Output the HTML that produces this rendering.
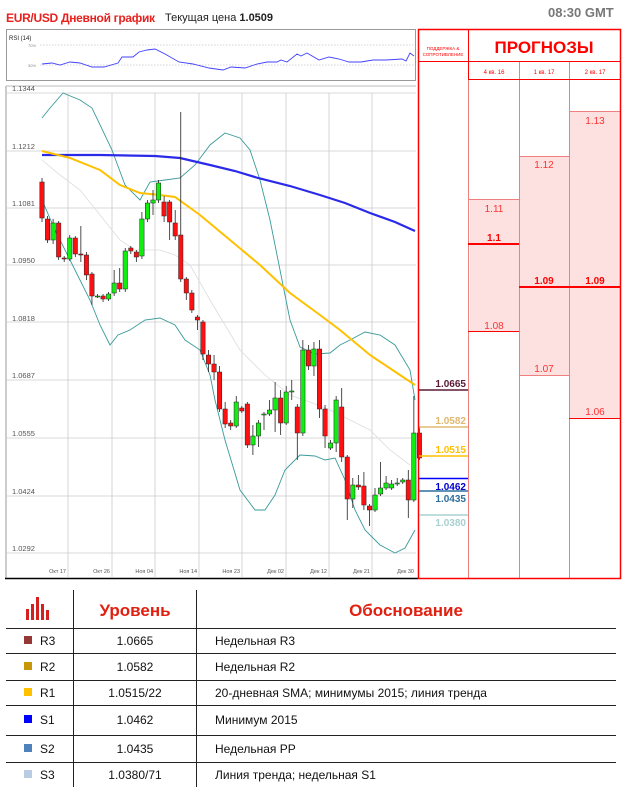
<!DOCTYPE html>
<html><head><meta charset="utf-8">
<style>
body{margin:0;background:#fff;width:627px;height:795px;overflow:hidden;font-family:"Liberation Sans",sans-serif;position:relative}
.a{position:absolute;white-space:nowrap}
</style></head><body>
<div class="a" style="left:6px;top:11px;font-size:12px;font-weight:bold;color:#e8201e;letter-spacing:-0.3px">EUR/USD Дневной график</div>
<div class="a" style="left:165px;top:12px;font-size:11px;color:#222">Текущая цена <b>1.0509</b></div>
<div class="a" style="left:548px;top:5px;font-size:13px;font-weight:bold;color:#777">08:30 GMT</div>

<svg class="a" style="left:0;top:0" width="627" height="795" id="s" xmlns="http://www.w3.org/2000/svg" font-family="Liberation Sans, sans-serif">
<!-- RSI -->
<rect x="6.5" y="29.5" width="409" height="51" fill="#fff" stroke="#999"/>
<text x="9" y="40" font-size="6" fill="#222">RSI (14)</text>
<line x1="40" y1="45" x2="414" y2="45" stroke="#aaa" stroke-dasharray="1.5,1.5" stroke-width="0.6"/>
<line x1="40" y1="65" x2="414" y2="65" stroke="#aaa" stroke-dasharray="1.5,1.5" stroke-width="0.6"/>
<text x="28" y="47" font-size="4" fill="#888">70%</text>
<text x="28" y="67" font-size="4" fill="#888">30%</text>
<polyline fill="none" stroke="#4040ff" stroke-width="0.9" points="42,64 52,63 60,65 70,62 80,63 92,67 104,67 118,63 122,57 133,57 139,52 147,50 155,49 165,54 179,62 193,64 209,68 223,70 231,67 245,68 257,64 267,62 277,62 281,60 287,62 297,54 301,56 307,53 319,60 329,57 339,59 349,62 361,62 373,60 386,60 402,59 406,61 410,53 414,56"/>
<!-- chart frame -->
<line x1="6" y1="86" x2="6" y2="578" stroke="#999"/>
<line x1="6" y1="86" x2="416" y2="86" stroke="#bbb"/>
<line x1="5" y1="578.5" x2="418" y2="578.5" stroke="#000" stroke-width="1.5"/>
<g id="grid" stroke="#ccc" stroke-width="0.8"></g>
<g font-size="7.5" fill="#555">
<text x="12" y="91">1.1344</text><text x="12" y="149">1.1212</text><text x="12" y="206">1.1081</text><text x="12" y="263">1.0950</text><text x="12" y="321">1.0818</text><text x="12" y="378">1.0687</text><text x="12" y="436">1.0555</text><text x="12" y="494">1.0424</text><text x="12" y="551">1.0292</text>
</g>
<g font-size="5.5" fill="#555" text-anchor="end">
<text x="66" y="573">Окт 17</text><text x="110" y="573">Окт 26</text><text x="153" y="573">Ноя 04</text><text x="197" y="573">Ноя 14</text><text x="240" y="573">Ноя 23</text><text x="284" y="573">Дек 02</text><text x="327" y="573">Дек 12</text><text x="370" y="573">Дек 21</text><text x="414" y="573">Дек 30</text>
</g>
<polyline fill="none" stroke="#ddd" stroke-width="0.8" points="42,160 60,175 80,190 100,215 120,240 135,250 160,250 175,255 190,265 210,300 240,350 265,375 290,395 310,402 330,410 350,420 370,430 390,450 410,465"/>
<polyline fill="none" stroke="#3a9a9a" stroke-width="0.9" points="42,118 50,108 63,93 80,100 92,108 112,150 125,185 140,200 150,182 165,180 180,178 195,165 210,145 225,133 240,138 250,150 260,180 270,220 280,270 290,320 300,347 315,354 330,353 340,345 350,340 365,332 380,335 395,345 410,370 415,400"/>
<polyline fill="none" stroke="#3a9a9a" stroke-width="0.9" points="42,200 55,230 70,260 90,300 100,325 110,345 118,335 130,330 145,320 160,318 175,325 185,340 200,350 210,375 215,400 225,440 240,490 255,510 265,510 275,495 285,470 300,455 315,456 325,460 335,458 345,480 355,510 365,530 380,545 395,553 405,548 415,530"/>
<polyline fill="none" stroke="#2a2ae8" stroke-width="2.2" points="42,155 100,155 155,156 180,158 210,165 235,171 258,178 290,186 320,195 345,203 370,213 395,222 415,231"/>
<polyline fill="none" stroke="#ffc000" stroke-width="2" points="42,151 70,158 100,170 120,185 140,193 160,195 175,197 200,215 230,240 260,265 290,293 320,315 340,330 370,355 400,375 415,385"/>
<g id="cd"></g>

<!-- forecast table -->
<rect x="470" y="199" width="49" height="132" fill="#fde1e1"/>
<rect x="519" y="156" width="50" height="219" fill="#fde1e1"/>
<rect x="569" y="111" width="51" height="307" fill="#fde1e1"/>
<g stroke="#f08080" stroke-width="1">
<line x1="468.5" y1="61" x2="468.5" y2="578"/><line x1="519.5" y1="61" x2="519.5" y2="578"/><line x1="569.5" y1="61" x2="569.5" y2="578"/>
<line x1="468" y1="199.5" x2="519" y2="199.5"/><line x1="519" y1="156.5" x2="569" y2="156.5"/><line x1="569" y1="111.5" x2="620" y2="111.5"/>
<line x1="519" y1="375.5" x2="569" y2="375.5"/>
</g>
<g stroke="#ff0000">
<line x1="468" y1="331.5" x2="519" y2="331.5"/><line x1="569" y1="418.5" x2="620" y2="418.5"/>
<line x1="468" y1="244" x2="519" y2="244" stroke-width="2"/>
<line x1="519" y1="287" x2="620" y2="287" stroke-width="2"/>
<line x1="418" y1="61.5" x2="620" y2="61.5"/><line x1="468" y1="79.5" x2="620" y2="79.5"/>
<line x1="468.5" y1="29" x2="468.5" y2="80"/>
<rect x="418.5" y="29.5" width="202" height="549" fill="none" stroke-width="1.5"/>
</g>
<g fill="#ff3030" font-size="10" text-anchor="middle">
<text x="494" y="212">1.11</text><text x="494" y="329">1.08</text><text x="544" y="168">1.12</text><text x="544" y="372">1.07</text><text x="595" y="124">1.13</text><text x="595" y="415">1.06</text>
</g>
<g fill="#ff0000" font-size="10" font-weight="bold" text-anchor="middle">
<text x="494" y="241">1.1</text><text x="544" y="284">1.09</text><text x="595" y="284">1.09</text>
</g>
<text x="544" y="53" font-size="17" fill="#ff0000" text-anchor="middle" font-weight="bold">ПРОГНОЗЫ</text>
<g fill="#ff0000" font-size="6" text-anchor="middle"><text x="494" y="74">4 кв. 16</text><text x="544" y="74">1 кв. 17</text><text x="595" y="74">2 кв. 17</text></g>
<g fill="#ff0000" font-size="4.5" text-anchor="middle"><text x="443" y="50">ПОДДЕРЖКА &amp;</text><text x="443" y="56">СОПРОТИВЛЕНИЕ</text></g>
<!-- S/R -->
<g font-size="10" font-weight="bold" text-anchor="end">
<line x1="419" y1="390" x2="468" y2="390" stroke="#5a1a33" stroke-width="1.5"/><text x="466" y="387" fill="#5a1a33">1.0665</text>
<line x1="419" y1="427" x2="468" y2="427" stroke="#e0b870" stroke-width="1.5"/><text x="466" y="424" fill="#e0b870">1.0582</text>
<line x1="419" y1="456" x2="468" y2="456" stroke="#ffc000" stroke-width="1.5"/><text x="466" y="453" fill="#ffc000">1.0515</text>
<line x1="419" y1="478.5" x2="468" y2="478.5" stroke="#0000ff" stroke-width="1.5"/><text x="466" y="490" fill="#0000cc">1.0462</text>
<line x1="419" y1="491" x2="468" y2="491" stroke="#2e6e9e" stroke-width="1.5"/><text x="466" y="502" fill="#2e6e9e">1.0435</text>
<line x1="419" y1="515" x2="468" y2="515" stroke="#a8d0d0" stroke-width="1.5"/><text x="466" y="526" fill="#a8d0d0">1.0380</text>
</g>

<!-- bottom table -->
<g fill="#d42020"><rect x="26" y="609" width="3" height="11"/><rect x="31" y="604" width="3" height="16"/><rect x="36" y="597" width="3" height="23"/><rect x="41" y="604" width="3" height="16"/><rect x="46" y="610" width="3" height="10"/></g>
<text x="135" y="616" font-size="17" font-weight="bold" fill="#e02010" text-anchor="middle">Уровень</text>
<text x="406" y="616" font-size="17" font-weight="bold" fill="#e02010" text-anchor="middle">Обоснование</text>
<g stroke="#222" stroke-width="1">
<line x1="73.5" y1="590" x2="73.5" y2="787"/><line x1="196.5" y1="590" x2="196.5" y2="787"/>
<line x1="6" y1="628.5" x2="616" y2="628.5"/><line x1="6" y1="653.5" x2="616" y2="653.5"/><line x1="6" y1="680.5" x2="616" y2="680.5"/><line x1="6" y1="705.5" x2="616" y2="705.5"/><line x1="6" y1="735.5" x2="616" y2="735.5"/><line x1="6" y1="762.5" x2="616" y2="762.5"/>
</g>
<g font-size="12" fill="#111">
<rect x="24" y="636" width="8" height="8" fill="#953735"/><text x="40" y="645">R3</text><text x="135" y="645" text-anchor="middle">1.0665</text><text x="215" y="645">Недельная R3</text>
<rect x="24" y="662" width="8" height="8" fill="#c8960a"/><text x="40" y="671">R2</text><text x="135" y="671" text-anchor="middle">1.0582</text><text x="215" y="671">Недельная R2</text>
<rect x="24" y="688" width="8" height="8" fill="#ffc000"/><text x="40" y="697">R1</text><text x="135" y="697" text-anchor="middle">1.0515/22</text><text x="215" y="697">20-дневная SMA; минимумы 2015; линия  тренда</text>
<rect x="24" y="715" width="8" height="8" fill="#0000ff"/><text x="40" y="724">S1</text><text x="135" y="724" text-anchor="middle">1.0462</text><text x="215" y="724">Минимум 2015</text>
<rect x="24" y="744" width="8" height="8" fill="#4f81bd"/><text x="40" y="753">S2</text><text x="135" y="753" text-anchor="middle">1.0435</text><text x="215" y="753">Недельная PP</text>
<rect x="24" y="770" width="8" height="8" fill="#b8cce4"/><text x="40" y="779">S3</text><text x="135" y="779" text-anchor="middle">1.0380/71</text><text x="215" y="779">Линия тренда; недельная S1</text>
</g>
</svg>
<script>
var NS="http://www.w3.org/2000/svg";
var g=document.getElementById("grid");
function L(p,x1,y1,x2,y2,c,w){var l=document.createElementNS(NS,"line");l.setAttribute("x1",x1);l.setAttribute("y1",y1);l.setAttribute("x2",x2);l.setAttribute("y2",y2);if(c)l.setAttribute("stroke",c);if(w)l.setAttribute("stroke-width",w);p.appendChild(l);}
[68,112,155,199,242,286,329,372].forEach(function(x){L(g,x,93,x,578);});
[93,151,208,265,322,380,438,496,553].forEach(function(y){L(g,6,y,416,y);});
var c=[[182,218,178,222],[219,240,216,243],[240,223,219,244],[223,257,221,260],[258,259,256,262],[259,238,235,261],[238,254,236,257],[254,255,226,262],[255,275,252,280],[274,296,272,305],[296,296,294,298],[296,299,294,302],[299,294,292,301],[293,283,270,296],[283,289,268,292],[289,251,248,292],[248,251,246,254],[252,257,250,262],[256,219,212,259],[219,203,200,222],[203,200,190,215],[200,183,180,203],[202,216,196,222],[202,222,200,240],[223,236,210,240],[235,279,112,282],[279,293,277,300],[293,310,290,313],[317,320,315,330],[322,354,320,360],[355,364,350,372],[364,372,355,380],[372,409,366,412],[409,424,402,428],[423,426,420,430],[426,402,396,428],[408,411,406,413],[404,445,402,448],[445,436,425,455],[436,423,420,447],[414,414,412,430],[414,410,400,416],[410,398,382,432],[398,423,390,435],[423,392,386,425],[391,391,380,400],[407,433,404,460],[433,350,340,436],[350,366,345,370],[366,349,342,376],[349,409,340,418],[409,436,405,448],[448,443,440,450],[443,400,396,452],[407,457,388,462],[457,499,455,520],[499,485,478,508],[485,487,475,490],[486,505,472,510],[506,510,504,526],[510,495,488,512],[494,488,462,496],[488,483,476,490],[488,484,480,490],[483,483,478,486],[482,480,478,484],[480,500,470,518],[500,433,396,502],[433,458,426,460]];
var cd=document.getElementById("cd");
c.forEach(function(d,i){var x=42+i*5.55;L(cd,x,d[2],x,d[3],"#222",0.8);
var r=document.createElementNS(NS,"rect");var t=Math.min(d[0],d[1]),h=Math.max(1,Math.abs(d[1]-d[0]));
r.setAttribute("x",x-2.2);r.setAttribute("y",t);r.setAttribute("width",4.4);r.setAttribute("height",h);
r.setAttribute("fill",d[1]>d[0]?"#ff1010":"#10ee10");r.setAttribute("stroke","#222");r.setAttribute("stroke-width","0.5");cd.appendChild(r);});
</script>
</body></html>
